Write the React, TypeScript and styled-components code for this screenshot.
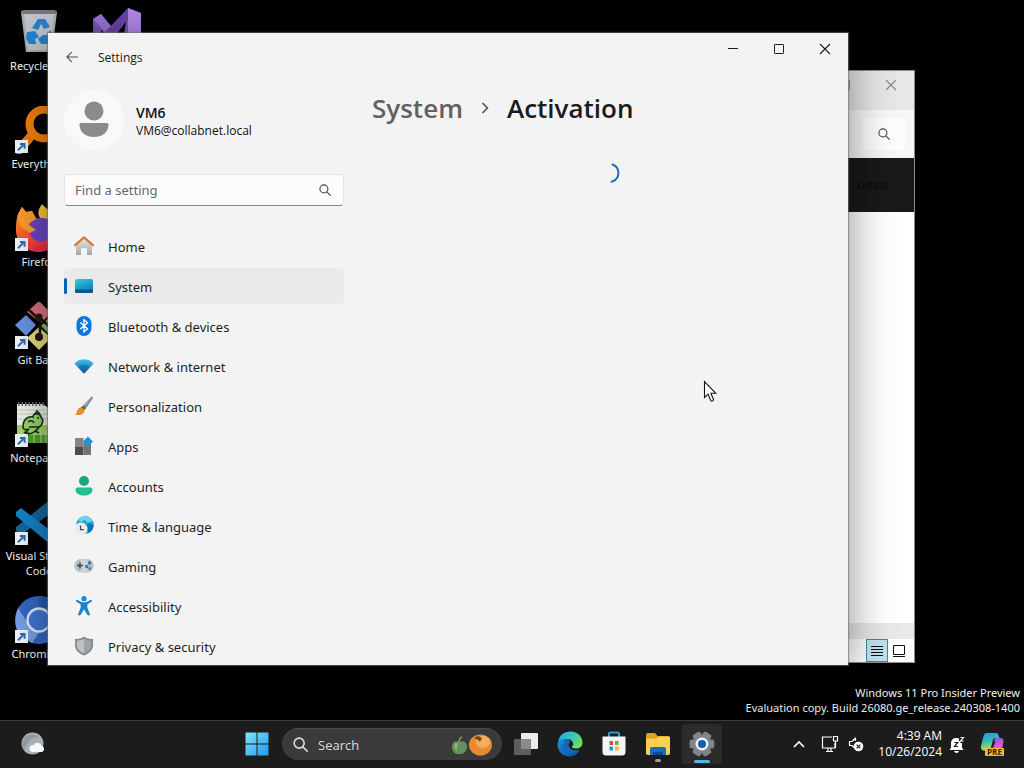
import React from 'react';
import styled, { createGlobalStyle } from 'styled-components';

const GlobalStyle = createGlobalStyle`
  *, *::before, *::after { box-sizing: border-box; }
  body {
    margin: 0;
    background: #000;
    font-family: "Open Sans", "Noto Sans", sans-serif;
    overflow: hidden;
  }
  button { font: inherit; color: inherit; border: 0; background: none; padding: 0; }
  svg { display: block; flex: none; }
`;

const Screen = styled.div`
  display: flex;
  flex-direction: column;
  height: 100vh;
`;

const Desktop = styled.main`
  position: relative;
  flex: 1;
  min-height: 0;
  overflow: hidden;
`;

const IconGrid = styled.div`
  display: grid;
  grid-auto-flow: column;
  grid-template-rows: repeat(7, 98px);
  grid-auto-columns: 78px;
`;

const Shortcut = styled.button`
  display: flex;
  flex-direction: column;
  align-items: center;
  gap: 2px;
  padding-top: 8px;
  color: #fff;
  font-family: "Noto Sans", sans-serif;
  font-size: 11px;
  line-height: 15px;
`;

const ShortcutLabel = styled.span`
  width: 74px;
  text-align: center;
`;

const BackWindow = styled.section`
  position: absolute;
  top: 70px;
  right: 109px;
  bottom: 57px;
  left: 480px;
  display: flex;
  flex-direction: column;
  border: 1px solid #8d8d8d;
  border-left: 0;
  background: #fff;
`;

const BackTitle = styled.div`
  display: flex;
  justify-content: flex-end;
  height: 39px;
  background: #e7e7e7;
  color: #8a8a8a;
`;

const BackToolbar = styled.div`
  display: flex;
  align-items: center;
  justify-content: flex-end;
  height: 48px;
  padding-right: 9px;
  background: #f7f7f7;
  color: #444;
`;

const BackSearch = styled.button`
  display: grid;
  place-items: center;
  width: 42px;
  height: 32px;
  border-radius: 4px;
  background: #fdfdfd;
`;

const BackCommands = styled.div`
  display: flex;
  align-items: center;
  justify-content: flex-end;
  height: 54px;
  padding-right: 25px;
  background: #191919;
  color: #070707;
  font-size: 10px;
`;

const BackContent = styled.div`
  flex: 1;
`;

const BackScroll = styled.div`
  height: 16px;
  background: #e9e9e9;
`;

const BackStatus = styled.div`
  display: flex;
  justify-content: flex-end;
  height: 23px;
  padding-right: 4px;
`;

const ViewButton = styled.button<{ $active?: boolean }>`
  display: grid;
  place-items: center;
  width: 22px;
  border: 1px solid ${p => (p.$active ? '#3f8ba5' : 'transparent')};
  background: ${p => (p.$active ? '#c3e3f0' : 'transparent')};
`;

const SettingsWindow = styled.section`
  position: absolute;
  top: 33px;
  right: 176px;
  bottom: 55px;
  left: 48px;
  display: flex;
  flex-direction: column;
  overflow: hidden;
  background: #f3f3f3;
  color: #1b1b1b;
  box-shadow: 0 0 1px 1px rgba(110, 110, 110, 0.6), 0 8px 44px rgba(0, 0, 0, 0.45);
`;

const TitleBar = styled.header`
  display: flex;
  align-items: center;
  height: 48px;
  flex: none;
`;

const BackButton = styled.button`
  display: grid;
  place-items: center;
  width: 48px;
  height: 40px;
  color: #555;
`;

const WindowTitle = styled.span`
  flex: 1;
  padding-left: 2px;
  font-size: 12px;
`;

const CaptionButton = styled.button<{ $compact?: boolean }>`
  display: grid;
  place-items: center;
  align-self: flex-start;
  width: 46px;
  height: ${p => (p.$compact ? 28 : 32)}px;
`;

const Body = styled.div`
  display: flex;
  flex: 1;
  min-height: 0;
`;

const Sidebar = styled.aside`
  flex: none;
  width: 296px;
  padding: 9px 0 0 16px;
`;

const Account = styled.button`
  display: flex;
  align-items: center;
  gap: 12px;
  text-align: left;
`;

const Names = styled.span`
  display: flex;
  flex-direction: column;
  padding-top: 4px;
  font-size: 12px;
  line-height: 18px;
  color: #111;
`;

const AccountName = styled.strong`
  font-size: 14px;
  font-weight: 600;
`;

const SearchField = styled.label`
  display: flex;
  align-items: center;
  height: 32px;
  margin: 24px 0 22px;
  padding: 0 12px 0 10px;
  border: 1px solid #e5e5e5;
  border-bottom-color: #868686;
  border-radius: 4px;
  background: #fcfcfc;
  color: #444;
`;

const SearchInput = styled.input`
  flex: 1;
  min-width: 0;
  padding: 0;
  border: 0;
  outline: 0;
  background: none;
  font: 13px "Noto Sans", sans-serif;
  &::placeholder { color: #686868; opacity: 1; }
`;

const NavList = styled.nav`
  display: flex;
  flex-direction: column;
  gap: 4px;
`;

const NavItem = styled.a<{ $active?: boolean }>`
  display: flex;
  align-items: center;
  gap: 14px;
  height: 36px;
  padding: 2px 0 0 ${p => (p.$active ? 0 : 10)}px;
  border-radius: 4px;
  background: ${p => (p.$active ? '#eaeaea' : 'transparent')};
  color: #1f1f1f;
  font-family: "Noto Sans", sans-serif;
  font-size: 13px;
  text-decoration: none;
  svg { margin-bottom: 2px; }
  &::before {
    content: "";
    display: ${p => (p.$active ? 'block' : 'none')};
    width: 3px;
    height: 16px;
    margin: 0 -7px 2px 0;
    border-radius: 2px;
    background: #0560b6;
  }
`;

const Content = styled.div`
  flex: 1;
  min-width: 0;
  padding: 8px 0 0 28px;
`;

const Breadcrumb = styled.h1`
  display: flex;
  align-items: center;
  gap: 18px;
  margin: 0;
  font-size: 26px;
  line-height: 38px;
  font-weight: 600;
`;

const Crumb = styled.a`
  color: #616161;
  text-decoration: none;
`;

const Loading = styled.div`
  display: flex;
  justify-content: center;
  padding-top: 36px;
`;

const Pointer = styled.div`
  position: absolute;
  top: 380px;
  left: 703px;
`;

const Watermark = styled.p`
  position: absolute;
  right: 4px;
  bottom: 5px;
  margin: 0;
  color: #f0f0f0;
  font-family: "Noto Sans", sans-serif;
  font-size: 11px;
  line-height: 15px;
  text-align: right;
`;

const Taskbar = styled.footer`
  display: flex;
  align-items: center;
  height: 48px;
  box-shadow: inset 0 1px #3a3a3a;
  background: #1c1c1c;
  color: #fff;
`;

const Widgets = styled.div`
  display: flex;
  flex: 1 1 0;
`;

const WeatherButton = styled.button`
  margin-left: 20px;
`;

const AppRow = styled.div`
  display: flex;
  align-items: center;
`;

const TaskSearch = styled.button`
  display: flex;
  align-items: center;
  width: 220px;
  height: 32px;
  margin: 0 2px 0 3px;
  padding: 0 8px 0 11px;
  border-top: 1px solid #4c4c4c;
  border-radius: 16px;
  background: #3a3a3a;
  color: #dadada;
  font-size: 13px;
`;

const TaskSearchText = styled.span`
  flex: 1;
  padding-left: 10px;
  text-align: left;
`;

const TaskButton = styled.button<{ $state?: 'open' | 'active' }>`
  display: flex;
  flex-direction: column;
  align-items: center;
  justify-content: center;
  width: 40px;
  height: 40px;
  margin: 0 2px;
  padding-top: 6px;
  border-radius: 4px;
  background: ${p => (p.$state === 'active' ? '#2b2b2b' : 'transparent')};
  &::after {
    content: "";
    width: ${p => (p.$state === 'active' ? 16 : 6)}px;
    height: 3px;
    margin-top: 3px;
    border-radius: 2px;
    background: ${p => (p.$state === 'active' ? '#56b6e4' : p.$state === 'open' ? '#a0a0a0' : 'transparent')};
  }
`;

const Tray = styled.div`
  display: flex;
  flex: 1 1 65px;
  align-items: center;
  justify-content: flex-end;
`;

const TrayButton = styled.button<{ $wide?: boolean }>`
  display: grid;
  place-items: center;
  width: ${p => (p.$wide ? 36 : 26)}px;
  height: 40px;
`;

const Clock = styled.button`
  width: 80px;
  padding-right: 7px;
  font-size: 12px;
  line-height: 16px;
  text-align: right;
`;

const CopilotButton = styled.button`
  margin: 0 18px 0 15px;
`;

const Magnifier = ({ size = 12, weight = 1.1 }: { size?: number; weight?: number }) => (
  <svg width={size} height={size} viewBox="0 0 12 12" fill="none" stroke="currentColor" strokeWidth={weight} strokeLinecap="round">
    <circle cx="4.9" cy="4.9" r="4" />
    <path d="m7.9 7.9 3.4 3.4" />
  </svg>
);

const CloseGlyph = () => (
  <svg width="12" height="12" viewBox="0 0 12 12" stroke="currentColor" strokeWidth="1.1"><path d="M1 1l10 10M11 1 1 11" /></svg>
);
const MaxGlyph = () => (
  <svg width="10" height="10" viewBox="0 0 10 10" fill="none" stroke="currentColor"><rect x=".5" y=".5" width="9" height="9" rx=".6" /></svg>
);

/* ---------- desktop shortcut artwork ---------- */

const Arrow = () => (
  <g>
    <rect x="0" y="34" width="13" height="13" fill="#f4f8fc" />
    <path d="M3 44.2 8.3 39M5 38h4.6v4.8" fill="none" stroke="#2d6fae" strokeWidth="1.9" />
  </g>
);

const RecycleArt = () => (
  <svg width="48" height="48" viewBox="0 0 48 48">
    <path d="M6 4h36l-5 40H11z" fill="#a9aeb3" />
    <path d="M9 6h30l-4 36H13z" fill="#c0c4c8" />
    <path d="M6 3l3-1h30l3 1-1 3H7z" fill="#75797d" />
    <path d="M17 20l6-9h7l5 8-6 2-3-5-3 6zM12 24l8-1 4 6-4 2 1 5h-7l-3-6zM35 22l4 7-5 7h-8l-3-5 5-4h4z" fill="#2583cf" />
  </svg>
);
const VisualStudioArt = () => (
  <svg width="48" height="48" viewBox="0 0 48 48">
    <path d="M0 11 8 6 30 33 35 0 48 5v38l-13 5L8 22v26L0 38z" fill="#7d55b8" />
    <path d="M0 11 8 6 38 42l-3 6z" fill="#9a74d8" />
    <path d="M12 24 35 0v11L20 31z" fill="#6c43a8" />
    <path d="M35 0 48 5v38l-13 5z" fill="#b58ae8" />
  </svg>
);
const EverythingArt = () => (
  <svg width="48" height="48" viewBox="0 0 48 48">
    <path d="M4 44 17 29" stroke="#f47c0c" strokeWidth="9" strokeLinecap="round" />
    <circle cx="29" cy="18" r="14.5" fill="none" stroke="#f9800e" strokeWidth="8" />
    <Arrow />
  </svg>
);
const FirefoxArt = () => (
  <svg width="48" height="48" viewBox="0 0 48 48">
    <defs>
      <linearGradient id="ffx" x1=".2" y1="0" x2=".5" y2="1">
        <stop offset="0" stopColor="#ffb01f" /><stop offset=".45" stopColor="#ff6a2a" /><stop offset="1" stopColor="#f0244d" />
      </linearGradient>
    </defs>
    <path d="M27 0c-5 7-4 10-2 14l16 4C42 10 32 6 27 0z" fill="#ffcc35" />
    <path d="M3 10 7 3l4 5 6-1 4 7 10 4 12-8c8 18 1 36-17 38C12 49 2 40 1 28c0-7 0-12 2-18z" fill="url(#ffx)" />
    <path d="M14 21c3-7 12-8 19-6 6 3 8 9 6 15-3 6-12 9-19 6-6-4-7-9-6-15z" fill="#6d45ca" />
    <path d="M3 10 7 3l4 5 6-1 4 8-8 5 8 6-6 3-9-6z" fill="#ff9d2e" />
    <Arrow />
  </svg>
);
const GitArt = () => (
  <svg width="48" height="48" viewBox="0 0 48 48">
    <path d="m11 13 10 10-10 11L0 23z" fill="#6495e3" />
    <path d="M24-1 36 11 26 21 12 10z" fill="#dc7280" />
    <path d="m37 12 11 12-11 11-11-11z" fill="#88b76b" />
    <path d="m24 25 12 11-12 12-12-12z" fill="#e7df80" />
    <path d="M14 8 25 18v18M25 16l10 9" fill="none" stroke="#1c1210" strokeWidth="2.6" />
    <circle cx="24" cy="35" r="4" fill="#28140f" />
    <circle cx="24" cy="15" r="3.5" fill="#28140f" />
    <Arrow />
  </svg>
);
const NotepadArt = () => (
  <svg width="48" height="48" viewBox="0 0 48 48">
    <path d="M2 4h26l16 12v27H2z" fill="#f3f3ef" />
    <path d="M2 25h42v18H2z" fill="#a5d766" />
    <path d="M2 35h42v8H2z" fill="#4ea628" />
    <path d="M3 4h26" stroke="#666" strokeWidth="4" strokeDasharray="1.5 2" />
    <path d="M2 10h28M2 14h36M2 19h40M6 30v13M12 29v14M19 32v11M26 30v13M31 29v14" stroke="#c9d2b9" />
    <path d="M8 27c0-8 5-11 10-10 0-5 7-4 8 0 3 3 2 8-2 10-3 5-10 9-13 5l3-3c-3 1-6 1-6-2z" fill="#9bd86a" stroke="#173017" strokeWidth="1.6" />
    <path d="M13 22q4-3 6 1M14 27h10M22 18h2M9 32l5 3M20 31l4 2M20 14l2-3 3 3" fill="none" stroke="#173017" strokeWidth="1.5" />
    <Arrow />
  </svg>
);
const CodeArt = () => (
  <svg width="48" height="48" viewBox="0 0 48 48">
    <path d="M36 1 48 6v37l-12 5z" fill="#2fa2e6" />
    <path d="M36 1v14L6 37l-5-4v-4z" fill="#1368a3" />
    <path d="M36 47V33L6 10l-5 4v4z" fill="#1684cc" />
    <Arrow />
  </svg>
);
const ChromiumArt = () => (
  <svg width="48" height="48" viewBox="0 0 48 48">
    <circle cx="24" cy="24" r="24" fill="#3569c6" />
    <path d="M3 12C0 19-1 29 3 36l14 11 8-12-11-6z" fill="#78a2e8" />
    <path d="M24 0a24 24 0 0 1 21 12H24z" fill="#235bb8" />
    <circle cx="24" cy="24" r="11.5" fill="#3f78dd" stroke="#e6eefb" strokeWidth="2.3" />
    <Arrow />
  </svg>
);

const shortcuts = [
  { label: 'Recycle Bin', art: <RecycleArt /> },
  { label: 'Everything', art: <EverythingArt /> },
  { label: 'Firefox', art: <FirefoxArt /> },
  { label: 'Git Bash', art: <GitArt /> },
  { label: 'Notepad++', art: <NotepadArt /> },
  { label: 'Visual Studio Code', art: <CodeArt /> },
  { label: 'Chromium', art: <ChromiumArt /> },
];

/* ---------- settings category artwork ---------- */

const Art = ({ children }: { children: React.ReactNode }) => (
  <svg width="20" height="20" viewBox="0 0 20 20" aria-hidden="true">{children}</svg>
);

const categories = [
  { label: 'Home', art: (
    <Art>
      <defs><linearGradient id="hm" x2="0" y2="1"><stop stopColor="#e8e8e8" /><stop offset="1" stopColor="#a5a5a5" /></linearGradient></defs>
      <path d="M2 9 10 2l8 7v10h-5v-7H7v7H2z" fill="url(#hm)" />
      <path d="M1.200 9.200 10 1.400l8.800 7.800" fill="none" stroke="#d8793a" strokeWidth="2.4" strokeLinecap="round" strokeLinejoin="round" />
    </Art>
  ) },
  { label: 'System', active: true, art: (
    <Art>
      <defs><linearGradient id="sy" x2=".5" y2="1"><stop stopColor="#36d0d8" /><stop offset="1" stopColor="#0b7bbc" /></linearGradient></defs>
      <rect x="1" y="3" width="18" height="14" rx="1.5" fill="url(#sy)" />
      <path d="M1 13.500h18v2a1.500 1.500 0 0 1-1.500 1.500h-15A1.500 1.500 0 0 1 1 15.500z" fill="#0c568b" />
    </Art>
  ) },
  { label: 'Bluetooth & devices', art: (
    <Art>
      <rect x="2.500" y="0" width="15" height="20" rx="7.500" fill="#0a78dd" />
      <path d="m6.300 6.400 7.200 6.400-3.600 3.200V3.500l3.600 3.200-7.200 6.200" fill="none" stroke="#fff" strokeWidth="1.300" strokeLinejoin="round" />
    </Art>
  ) },
  { label: 'Network & internet', art: (
    <Art>
      <defs><linearGradient id="nw" x2="0" y2="1"><stop stopColor="#3fc4ee" /><stop offset="1" stopColor="#0a5ca0" /></linearGradient></defs>
      <path d="M.5 7.400C5.500 1.700 14.500 1.700 19.500 7.400L10.800 17q-.8.700-1.600 0z" fill="url(#nw)" />
      <path d="M4 11.300c3.500-3.700 8.500-3.700 12 0L10.800 17q-.8.700-1.600 0z" fill="#0a62a5" opacity=".5" />
    </Art>
  ) },
  { label: 'Personalization', art: (
    <Art>
      <path d="M7.500 11 17.500.8q1.800-.6 1.500 1.200L11 13.800z" fill="#7d8790" />
      <path d="M8.900 10.500 18 1.200 12 8.900z" fill="#b3bcc3" />
      <path d="M1 18.500c2-1 1.500-3.500 3-5.600 1.600-2.100 4.700-2 6 .1 1.200 2.500-.7 5.300-3.700 5.900-2 .4-4 .2-5.300-.4z" fill="#e78d2d" />
      <path d="M7.300 11.500 9 9.800l2.600 2.500-1.300 1.800z" fill="#655f59" />
    </Art>
  ) },
  { label: 'Apps', art: (
    <Art>
      <path d="M1 2h8.500v8.500H1z" fill="#858585" /><path d="M1 10.500h8.500V19H1z" fill="#4c4c4c" /><path d="M9.500 5H17v14H9.500z" fill="#747474" />
      <path d="m14 .5 5 5-5 5-5-5z" fill="#1e94df" />
    </Art>
  ) },
  { label: 'Accounts', art: (
    <Art>
      <circle cx="10" cy="5" r="5" fill="#1da781" />
      <path d="M3.500 11.500h13q2 0 2 2c0 4-4 6-8.500 6s-8.500-2-8.500-6q0-2 2-2z" fill="#25bd92" />
    </Art>
  ) },
  { label: 'Time & language', art: (
    <Art>
      <circle cx="11" cy="9" r="8.900" fill="#26a5d7" />
      <path d="M4 4C8-2 16 0 18.500 5l-5 1.500L11 3.800 7 6z" fill="#6bd4eb" />
      <path d="M19.500 9c0 4-2 6.500-5 8l-2-7 3-3z" fill="#0e70b4" />
      <circle cx="7" cy="13" r="6.500" fill="#e9edef" />
      <path d="M6.500 9.500v4.200h3.300" fill="none" stroke="#444" strokeWidth="1.200" />
    </Art>
  ) },
  { label: 'Gaming', art: (
    <Art>
      <rect x=".3" y="3" width="19.400" height="13.500" rx="6.500" fill="#b5c0c8" />
      <path d="M6.500 3h7v13h-7z" fill="#ccd4da" />
      <path d="M3 9.500h6M6 6.500v6" stroke="#3f4850" strokeWidth="1.600" />
      <circle cx="15.600" cy="7" r="1.700" fill="#2678bd" /><circle cx="12.700" cy="10.500" r="1.700" fill="#2678bd" /><circle cx="15.700" cy="12.500" r="1.200" fill="#4d6c84" />
    </Art>
  ) },
  { label: 'Accessibility', art: (
    <Art>
      <circle cx="10" cy="2.700" r="2.600" fill="#168bd3" />
      <path d="m3 3.800 5 2.400h4l5-2.400q1.600.3.700 1.800L13.300 8.400v3.200l2.700 7q-.8 1.500-2.500.5L10 13.200l-3.500 5.900q-1.700 1-2.500-.5l2.700-7V8.400L2.300 5.600Q1.400 4.100 3 3.800z" fill="#1683cb" />
    </Art>
  ) },
  { label: 'Privacy & security', art: (
    <Art>
      <path d="M10 .5C12.500 2.600 15.500 3 19 3v6c0 5-3.500 8.500-9 10.500C4.500 17.500 1 14 1 9V3c3.500 0 6.500-.4 9-2.500z" fill="#85898b" />
      <path d="M10 2.500c2.200 1.500 4.500 2 7.200 2.100V9c0 4-2.900 6.800-7.200 8.600z" fill="#a0a4a6" />
      <path d="M10 2.500C7.800 4 5.500 4.500 2.800 4.600V9c0 4 2.900 6.800 7.200 8.600z" fill="#bec1c2" />
    </Art>
  ) },
];

/* ---------- taskbar artwork ---------- */

const WeatherArt = () => (
  <svg width="25" height="24" viewBox="0 0 25 24">
    <circle cx="12.500" cy="11.500" r="11" fill="#a8afb5" />
    <path d="M5 5q7-6 14 0Q12 4 8 11 4 16 5 19-2 12 5 5z" fill="#858e95" opacity=".6" />
    <path d="M13 20a3.500 3.500 0 1 1 .7-6.900 4.300 4.300 0 0 1 8 1A3 3 0 0 1 21.500 20z" fill="#f7f8f9" />
  </svg>
);
const StartArt = () => (
  <svg width="24" height="24" viewBox="0 0 24 24">
    <defs><linearGradient id="st" x2="1" y2="1" gradientUnits="objectBoundingBox"><stop stopColor="#80e4fb" /><stop offset="1" stopColor="#2099f0" /></linearGradient></defs>
    <path d="M.5.5h11v11H.5zM12.500.5h11v11h-11zM.5 12.500h11v11H.5zM12.500 12.500h11v11h-11z" fill="url(#st)" />
  </svg>
);
const FruitArt = () => (
  <svg width="44" height="24" viewBox="0 0 44 24">
    <path d="M9 9c5-2 8 1 8 5s-4 8-8 7c-4 1-7-3-7-7s3-7 7-5z" fill="#66915f" />
    <path d="M5 11q2-2 3 0-2 4-1 7-4-3-2-7z" fill="#8fb285" />
    <path d="M9 10q0-5 3-6" stroke="#85986a" strokeWidth="1.500" fill="none" />
    <ellipse cx="30.500" cy="12" rx="11.500" ry="10.500" fill="#e98a35" />
    <ellipse cx="33" cy="9" rx="7" ry="6" fill="#f5ae5a" />
    <path d="m24 5 4-2 4 2-2 4-2-2z" fill="#6c4a22" />
  </svg>
);
const TaskViewArt = () => (
  <svg width="26" height="24" viewBox="0 0 26 24">
    <rect x="8" y="1" width="17" height="16" rx="1" fill="#ececec" />
    <rect x="1" y="7" width="17" height="16" rx="1" fill="#5e5e5e" />
    <path d="M8 7h10v10H8z" fill="#8b8b8b" />
  </svg>
);
const EdgeArt = () => (
  <svg width="26" height="26" viewBox="0 0 26 26">
    <defs>
      <linearGradient id="eg" x2="1" y2=".6"><stop stopColor="#25a8e8" /><stop offset=".6" stopColor="#37c8b4" /><stop offset="1" stopColor="#70dc58" /></linearGradient>
      <linearGradient id="eb" x2="1" y2="1"><stop stopColor="#1a91df" /><stop offset="1" stopColor="#0a4c9e" /></linearGradient>
    </defs>
    <path d="M1 12C2 4 7 .5 13.500.5 21 .5 25.500 6 25.500 11.500c0 4-3 6-6 6-4 0-5-1-4.500-2 1-1 1.500-2 1-3.500-.8-2.500-3-4-6-4C6 8 2.500 10 1 12z" fill="url(#eg)" />
    <path d="M.5 13C1 9 5.500 6.800 9.500 8 6.500 10 6 14 8.500 18c2.700 4 8.500 4 14 1-2 4.500-6.500 7-11 6.500C5 25 .5 20 .5 13z" fill="url(#eb)" />
    <path d="M9.500 8c-4 3-4 8-1 11.500 3 3.500 9 3 14-.5-5 1-9 0-10.500-3.500-.8-2-.3-3.500 1.200-4.500C13.500 9 11.500 8 9.500 8z" fill="#126ab7" />
  </svg>
);
const StoreArt = () => (
  <svg width="24" height="26" viewBox="0 0 24 26">
    <path d="M7 7V3q0-1.500 1.500-1.500h7Q17 1.500 17 3v4" fill="none" stroke="#299ed6" strokeWidth="2" />
    <path d="M.5 5.500h23V21q0 3.500-3.500 3.500H4Q.5 24.500.5 21z" fill="#f5f5f5" />
    <path d="M7.500 10H11v4H7.500z" fill="#da4c28" /><path d="M13 10h3.500v4H13z" fill="#72a92a" /><path d="M7.500 15.500H11v4H7.500z" fill="#2692ce" /><path d="M13 15.500h3.500v4H13z" fill="#efb620" />
  </svg>
);
const FolderArt = () => (
  <svg width="26" height="24" viewBox="0 0 26 24">
    <path d="M1 3q0-2 2-2h7l2.500 3H23q2 0 2 2v16H1z" fill="#dda11e" />
    <path d="M1 8q0-1.500 1.500-1.500h9L14 4.500h9.500Q25 4.500 25 6v15q0 2-2 2H3q-2 0-2-2z" fill="#fbd051" />
    <path d="M5 23v-6q0-2 2-2h12q2 0 2 2v6z" fill="#1670bd" /><path d="M8 20h10v3H8z" fill="#0d4e8a" />
  </svg>
);
const GearArt = () => (
  <svg width="26" height="26" viewBox="0 0 26 26">
    <g fill="#7e8489">
      <circle cx="13" cy="13" r="9.500" />
      {[0, 60, 120, 180, 240, 300].map(a => (
        <rect key={a} x="8.500" y=".6" width="9" height="8" rx="2.200" transform={`rotate(${a + 30} 13 13)`} />
      ))}
    </g>
    <circle cx="13" cy="13" r="6.500" fill="#edf1f4" />
    <circle cx="13" cy="13" r="4" fill="#135fae" />
  </svg>
);
const NetworkArt = () => (
  <svg width="18" height="18" viewBox="0 0 18 18" fill="none" stroke="#fff" strokeWidth="1.200">
    <path d="M11 2H1.500v11H14V8M5 16.500h7M7 13v3.500M10 13v3.500" />
    <path d="M12.500 1.500h4V6h-4zM14.500 6v7" />
  </svg>
);
const SoundArt = () => (
  <svg width="16" height="16" viewBox="0 0 16 16" fill="none" stroke="#fff" strokeWidth="1.200">
    <path d="M7.500 5V2L4 5.500H1.500v4H4l2 2" strokeLinejoin="round" />
    <circle cx="10.500" cy="10.500" r="4.800" fill="#fff" stroke="none" />
    <path d="m8.700 8.700 3.600 3.600M12.300 8.700l-3.600 3.600" stroke="#1c1c1c" />
  </svg>
);
const BellArt = () => (
  <svg width="16" height="17" viewBox="0 0 16 17">
    <path d="M2 11.500V7.500C2 4 4 2 7.500 2c1 0 2 .2 2.700.6L9.700 5H12l-1 2h2v4.500l1.500 2.500H.5zM5 15h5q-.5 2-2.500 2T5 15z" fill="#fff" />
    <path d="M5.500 6.500h3.300l-3.300 4h3.500" stroke="#1c1c1c" strokeWidth="1.200" fill="none" />
    <path d="M11.500 1.500h3l-3 3.500h3" stroke="#fff" strokeWidth="1.100" fill="none" />
  </svg>
);
const CopilotArt = () => (
  <svg width="26" height="25" viewBox="0 0 26 25">
    <defs>
      <linearGradient id="ca" x2=".2" y2="1"><stop stopColor="#239cf0" /><stop offset=".5" stopColor="#30b9ba" /><stop offset="1" stopColor="#b8dc45" /></linearGradient>
      <linearGradient id="cb" x2=".2" y2="1"><stop stopColor="#745ded" /><stop offset=".6" stopColor="#df58c6" /><stop offset="1" stopColor="#ff9b65" /></linearGradient>
    </defs>
    <path d="M7 1h9q2 0 2.500 2l1 3h-4q-2 0-2.600 2L11 16q-.8 2.500-3 2.500H4Q.5 18.500 1 14L3.500 4Q4.300 1 7 1z" fill="url(#ca)" />
    <path d="M15.500 6h5q3.500 0 3 4L21.500 19q-.8 3-3.500 3h-8q1.500-.5 2-2.500L14 9q.4-1.500 1.500-3z" fill="url(#cb)" />
    <path d="M13.500 9h2l-2 6h-2z" fill="#25202c" />
    <rect x="5" y="16" width="19" height="8" rx="1" fill="#fbb92f" />
    <text x="14.500" y="23" textAnchor="middle" fontFamily="Open Sans, sans-serif" fontSize="8" fontWeight="700" fill="#2d2109">PRE</text>
  </svg>
);

export default function App() {
  return (
    <Screen>
      <GlobalStyle />
      <Desktop>
        <IconGrid>
          {shortcuts.map(s => (
            <Shortcut key={s.label}>{s.art}<ShortcutLabel>{s.label}</ShortcutLabel></Shortcut>
          ))}
          <Shortcut aria-label="Visual Studio"><VisualStudioArt /></Shortcut>
        </IconGrid>

        <Watermark>Windows 11 Pro Insider Preview<br />Evaluation copy. Build 26080.ge_release.240308-1400</Watermark>

        <BackWindow>
          <BackTitle>
            <CaptionButton $compact aria-label="Maximize"><MaxGlyph /></CaptionButton>
            <CaptionButton $compact aria-label="Close"><CloseGlyph /></CaptionButton>
          </BackTitle>
          <BackToolbar><BackSearch aria-label="Search folder"><Magnifier /></BackSearch></BackToolbar>
          <BackCommands>Details</BackCommands>
          <BackContent />
          <BackScroll />
          <BackStatus>
            <ViewButton $active aria-label="Details view">
              <svg width="12" height="10" viewBox="0 0 12 10" stroke="#111"><path d="M0 .5h12M0 3.500h12M0 6.500h12M0 9.500h12" /></svg>
            </ViewButton>
            <ViewButton aria-label="Large icons view">
              <svg width="12" height="12" viewBox="0 0 12 12" fill="none" stroke="#111"><path d="M.5.5h11v9H.5zM0 11.500h12" /></svg>
            </ViewButton>
          </BackStatus>
        </BackWindow>

        <SettingsWindow>
          <TitleBar>
            <BackButton aria-label="Back">
              <svg width="12" height="12" viewBox="0 0 13 12" fill="none" stroke="currentColor" strokeWidth="1.200" strokeLinecap="round" strokeLinejoin="round"><path d="M6 1 1 6l5 5M1 6h11.500" /></svg>
            </BackButton>
            <WindowTitle>Settings</WindowTitle>
            <CaptionButton aria-label="Minimize">
              <svg width="10" height="10" viewBox="0 0 10 10" stroke="currentColor"><path d="M0 4.500h10" /></svg>
            </CaptionButton>
            <CaptionButton aria-label="Maximize"><MaxGlyph /></CaptionButton>
            <CaptionButton aria-label="Close"><CloseGlyph /></CaptionButton>
          </TitleBar>
          <Body>
            <Sidebar>
              <Account>
                <svg width="60" height="60" viewBox="0 0 60 60">
                  <circle cx="30" cy="30" r="30" fill="#f9f9f9" />
                  <circle cx="30" cy="21" r="9.500" fill="#8b8b8b" />
                  <path d="M17 33h26q1.500 0 1.500 1.500C44.500 42 39 47 30 47s-14.500-5-14.500-12.500Q15.500 33 17 33z" fill="#8b8b8b" />
                </svg>
                <Names><AccountName>VM6</AccountName>VM6@collabnet.local</Names>
              </Account>
              <SearchField>
                <SearchInput type="text" placeholder="Find a setting" aria-label="Find a setting" />
                <Magnifier />
              </SearchField>
              <NavList>
                {categories.map(c => (
                  <NavItem key={c.label} href="#" $active={c.active}>{c.art}{c.label}</NavItem>
                ))}
              </NavList>
            </Sidebar>
            <Content>
              <Breadcrumb>
                <Crumb href="#">System</Crumb>
                <svg width="8" height="12" viewBox="0 0 8 12" fill="none" stroke="#555" strokeWidth="1.700" strokeLinecap="round" strokeLinejoin="round"><path d="m2 1.500 4.500 4.500L2 10.500" /></svg>
                <span>Activation</span>
              </Breadcrumb>
              <Loading role="status" aria-label="Loading">
                <svg width="22" height="20" viewBox="0 0 22 20" fill="none" stroke="#1f6dbb" strokeWidth="2" strokeLinecap="round"><path d="M13.500 1.500a9 9 0 0 1-1 17.200" /></svg>
              </Loading>
            </Content>
          </Body>
        </SettingsWindow>

        <Pointer>
          <svg width="14" height="23" viewBox="0 0 14 23"><path d="M1.500 1.500v16l3.600-3.300 2.700 6.400q1.500 1.200 2.800-.8L7.900 13.300h5z" fill="#fff" stroke="#111" strokeWidth="1.100" /></svg>
        </Pointer>
      </Desktop>

      <Taskbar>
        <Widgets><WeatherButton aria-label="Weather"><WeatherArt /></WeatherButton></Widgets>
        <AppRow>
          <TaskButton aria-label="Start"><StartArt /></TaskButton>
          <TaskSearch>
            <Magnifier size={15} weight={1.3} />
            <TaskSearchText>Search</TaskSearchText>
            <FruitArt />
          </TaskSearch>
          <TaskButton aria-label="Task view"><TaskViewArt /></TaskButton>
          <TaskButton aria-label="Edge"><EdgeArt /></TaskButton>
          <TaskButton aria-label="Store"><StoreArt /></TaskButton>
          <TaskButton aria-label="File Explorer" $state="open"><FolderArt /></TaskButton>
          <TaskButton aria-label="Settings" $state="active"><GearArt /></TaskButton>
        </AppRow>
        <Tray>
          <TrayButton $wide aria-label="Show hidden icons">
            <svg width="12" height="8" viewBox="0 0 12 8" fill="none" stroke="#fff" strokeWidth="1.600"><path d="m1 7 5-5 5 5" /></svg>
          </TrayButton>
          <TrayButton aria-label="Network"><NetworkArt /></TrayButton>
          <TrayButton aria-label="Volume"><SoundArt /></TrayButton>
          <Clock>4:39 AM<br />10/26/2024</Clock>
          <button aria-label="Notifications"><BellArt /></button>
          <CopilotButton aria-label="Copilot"><CopilotArt /></CopilotButton>
        </Tray>
      </Taskbar>
    </Screen>
  );
}
